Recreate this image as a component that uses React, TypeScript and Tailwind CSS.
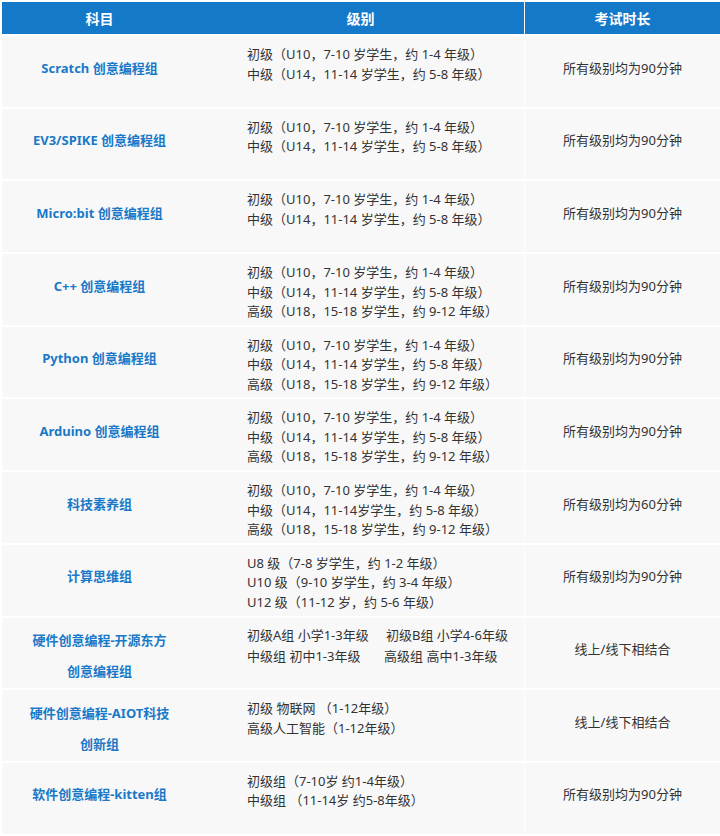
import React from "react";

type Row = {
  subject: string[];
  levels: React.ReactNode[];
  time: string;
  levelsLeading?: string;
};

const L3 = [
  "初级（U10，7-10 岁学生，约 1-4 年级）",
  "中级（U14，11-14 岁学生，约 5-8 年级）",
  "高级（U18，15-18 岁学生，约 9-12 年级）",
];

const rows: Row[] = [
  { subject: ["Scratch 创意编程组"], levels: L3.slice(0, 2), time: "所有级别均为90分钟" },
  { subject: ["EV3/SPIKE 创意编程组"], levels: L3.slice(0, 2), time: "所有级别均为90分钟" },
  { subject: ["Micro:bit 创意编程组"], levels: L3.slice(0, 2), time: "所有级别均为90分钟" },
  { subject: ["C++ 创意编程组"], levels: L3, time: "所有级别均为90分钟" },
  { subject: ["Python 创意编程组"], levels: L3, time: "所有级别均为90分钟" },
  { subject: ["Arduino 创意编程组"], levels: L3, time: "所有级别均为90分钟" },
  {
    subject: ["科技素养组"],
    levels: [
      "初级（U10，7-10 岁学生，约 1-4 年级）",
      "中级（U14，11-14岁学生，约 5-8 年级）",
      "高级（U18，15-18 岁学生，约 9-12 年级）",
    ],
    time: "所有级别均为60分钟",
  },
  {
    subject: ["计算思维组"],
    levels: [
      "U8 级（7-8 岁学生，约 1-2 年级）",
      "U10 级（9-10 岁学生，约 3-4 年级）",
      "U12 级（11-12 岁，约 5-6 年级）",
    ],
    time: "所有级别均为90分钟",
  },
  {
    subject: ["硬件创意编程-开源东方", "创意编程组"],
    levels: [
      <span key="a" className="flex">
        <span className="w-[139px] shrink-0">初级A组 小学1-3年级</span>
        <span>初级B组 小学4-6年级</span>
      </span>,
      <span key="b" className="flex">
        <span className="w-[137px] shrink-0">中级组 初中1-3年级</span>
        <span>高级组 高中1-3年级</span>
      </span>,
    ],
    time: "线上/线下相结合",
    levelsLeading: "pt-[7px] leading-[21.5px]",
  },
  {
    subject: ["硬件创意编程-AIOT科技", "创新组"],
    levels: ["初级 物联网 （1-12年级）", "高级人工智能（1-12年级）"],
    time: "线上/线下相结合",
  },
  {
    subject: ["软件创意编程-kitten组"],
    levels: ["初级组（7-10岁 约1-4年级）", "中级组 （11-14岁 约5-8年级）"],
    time: "所有级别均为90分钟",
  },
];

export default function App() {
  return (
    <div
      className="bg-white pt-[2px] pl-[2px] w-[720px] h-[836px] overflow-hidden"
      style={{ fontFamily: '"Noto Sans", "Noto Sans CJK SC", sans-serif' }}
    >
      <div className="flex flex-col gap-[2px]">
        <div className="flex h-[32px] text-white font-bold text-[14px]">
          <div className="w-[522px] bg-[#1479c9] flex">
            <div className="w-[195px] flex items-center justify-center">科目</div>
            <div className="w-[327px] flex items-center justify-center">级别</div>
          </div>
          <div className="w-[1px]" />
          <div className="w-[195px] bg-[#1479c9] flex items-center justify-center">考试时长</div>
        </div>
        {rows.map((r, i) => (
          <div key={i} className="flex h-[70.7px] text-[13px]">
            <div className="w-[522px] bg-[#f8f8f8] flex">
              <div className="w-[195px] flex flex-col items-center justify-center text-[#1a78c8] font-bold">
                {r.subject.length === 1 ? (
                  <div className="-translate-y-[3px]">{r.subject[0]}</div>
                ) : (
                  <div className="flex flex-col items-center leading-[31px] translate-y-[3px]">
                    {r.subject.map((s, j) => (
                      <div key={j}>{s}</div>
                    ))}
                  </div>
                )}
              </div>
              <div
                className={`w-[327px] pl-[50px] text-[#333333] ${
                  r.levelsLeading ?? "pt-[9px] leading-[19.5px]"
                }`}
              >
                {r.levels.map((l, j) => (
                  <div key={j} className="whitespace-nowrap">
                    {l}
                  </div>
                ))}
              </div>
            </div>
            <div className="w-[1px]" />
            <div className="w-[195px] bg-[#f8f8f8] flex items-center justify-center text-[#333333]">
              <div className="-translate-y-[3px]">{r.time}</div>
            </div>
          </div>
        ))}
      </div>
    </div>
  );
}
